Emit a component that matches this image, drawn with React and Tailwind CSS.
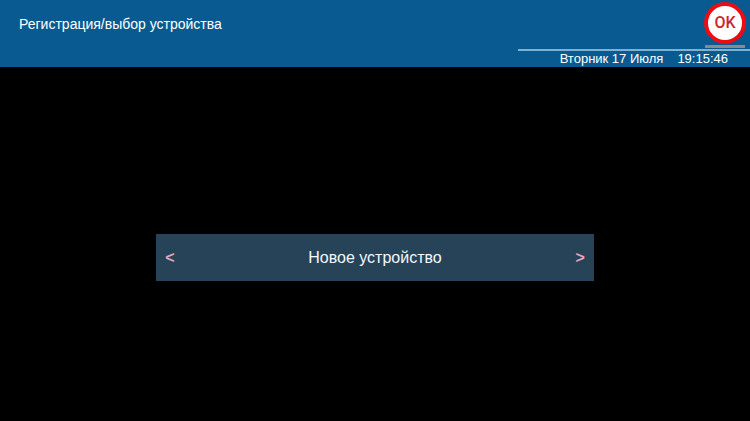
function Header() {
  return (
    <header className="flex h-[67px] justify-between bg-[#095a90] text-white">
      <h1 className="pt-3 pl-[19px] text-[14px] leading-6">Регистрация/выбор устройства</h1>
      <div className="flex w-[232px] flex-col">
        <div className="flex h-[49px] flex-col items-center gap-px self-end pt-[2px] pr-1">
          <button
            type="button"
            className="flex size-[42px] items-center justify-center rounded-full border-4 border-[#ee0c14] bg-white font-['Roboto',sans-serif] text-[16px] leading-none font-medium text-[#ce2530]"
          >
            OK
          </button>
          <div className="h-[3px] w-10 bg-[#858b8f]" />
        </div>
        <div className="flex justify-end gap-[14px] border-t-2 border-[#80b1cf] pr-[22px] text-[13px] leading-4">
          <span>Вторник 17 Июля</span>
          <time>19:15:46</time>
        </div>
      </div>
    </header>
  );
}

function DeviceSelector() {
  return (
    <div className="flex h-[47px] w-7/12 items-center justify-between bg-[#264358] px-[9px]">
      <button type="button" aria-label="Предыдущее устройство" className="text-[16px] leading-5 font-bold text-[#e3a5be]">
        &lt;
      </button>
      <span className="text-[16px] leading-5 text-[#f2f8ff]">Новое устройство</span>
      <button type="button" aria-label="Следующее устройство" className="text-[16px] leading-5 font-bold text-[#e3a5be]">
        &gt;
      </button>
    </div>
  );
}

export default function App() {
  return (
    <div className="flex min-h-screen flex-col bg-black font-['Liberation_Sans',Arial,sans-serif]">
      <Header />
      <main className="flex flex-1 items-center justify-center pt-[27px]">
        <DeviceSelector />
      </main>
    </div>
  );
}
